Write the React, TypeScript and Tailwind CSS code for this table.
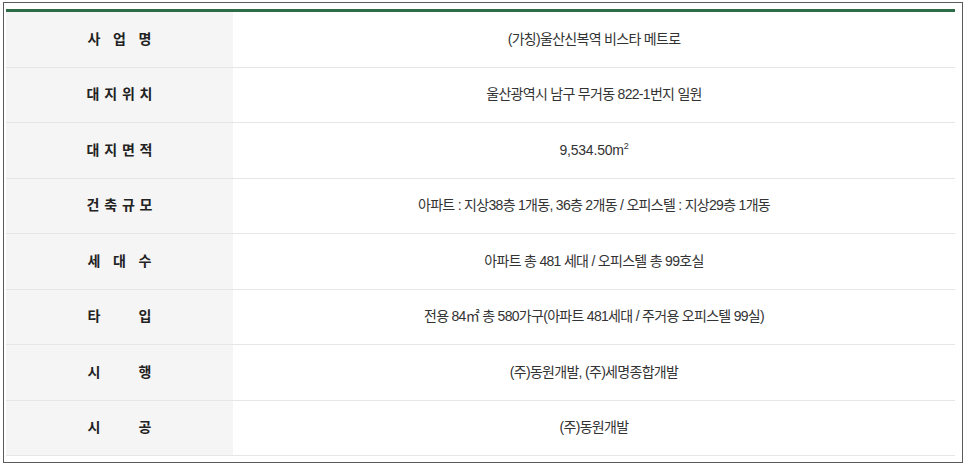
import React from "react";

const rows: { label: string[]; value: React.ReactNode }[] = [
  { label: ["사", "업", "명"], value: "(가칭)울산신복역 비스타 메트로" },
  { label: ["대", "지", "위", "치"], value: "울산광역시 남구 무거동 822-1번지 일원" },
  {
    label: ["대", "지", "면", "적"],
    value: (
      <span className="tracking-[-0.2px]">
        9,534.50m<span className="text-[9px] relative -top-[6px]">2</span>
      </span>
    ),
  },
  { label: ["건", "축", "규", "모"], value: "아파트 : 지상38층 1개동, 36층 2개동 / 오피스텔 : 지상29층 1개동" },
  { label: ["세", "대", "수"], value: "아파트 총 481 세대 / 오피스텔 총 99호실" },
  { label: ["타", "입"], value: "전용 84㎡ 총 580가구(아파트 481세대 / 주거용 오피스텔 99실)" },
  { label: ["시", "행"], value: "(주)동원개발, (주)세명종합개발" },
  { label: ["시", "공"], value: "(주)동원개발" },
];

export default function App() {
  return (
    <div
      className="w-[966px] h-[465px] bg-white overflow-hidden"
      style={{ fontFamily: '"Liberation Sans", "Noto Sans CJK KR", sans-serif' }}
    >
      <div className="ml-[3px] mt-[2px] w-[960px] h-[461px] border border-[#5a5a5a] pl-[2px] pt-[6px]">
        <div className="w-[949px] border-t-[3px] border-[#2e6b47]">
          {rows.map((r, i) => (
            <div key={i} className="flex h-[55.5px] border-b border-[#e6e6e6]">
              <div className="w-[227px] bg-[#f5f5f5] flex items-center justify-center">
                <div
                  className={
                    "flex justify-between text-[14px] font-bold text-[#222] " +
                    (r.label.length === 4 ? "w-[66px]" : "w-[64px]")
                  }
                >
                  {r.label.map((c, j) => (
                    <span key={j}>{c}</span>
                  ))}
                </div>
              </div>
              <div className="flex-1 flex items-center justify-center text-[14px] text-[#333] tracking-[-0.7px]">
                <span>{r.value}</span>
              </div>
            </div>
          ))}
        </div>
      </div>
    </div>
  );
}
